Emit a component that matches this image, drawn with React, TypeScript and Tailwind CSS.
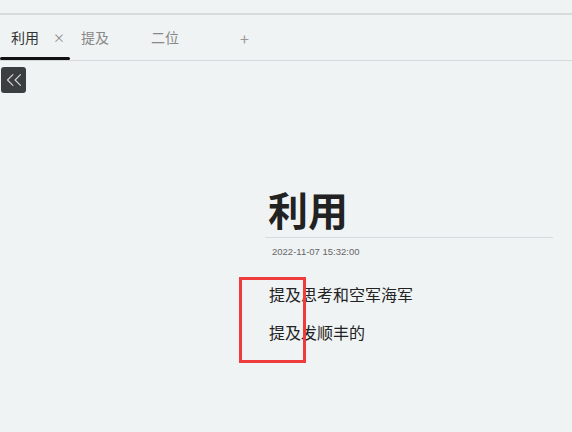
import React from "react";
import { ChevronsLeft } from "lucide-react";

const cjk = "font-['Noto_Sans_CJK_SC','Noto_Sans',sans-serif]";

export default function App() {
  return (
    <div className={`relative w-[572px] h-[432px] overflow-hidden bg-[#f0f3f4] ${cjk}`}>
      <div className="h-[13px]" />
      <div className="h-[2px] bg-[#d8dbdc]" />

      {/* tab bar */}
      <div className="flex h-[46px] items-center border-b border-[#d6d9db]">
        <div className="relative flex h-full w-[70px] items-center pl-[11px]">
          <span className="text-[14px] text-[#333]">利用</span>
          <span className="ml-[14px] text-[12px] text-[#888]">×</span>
          <div className="absolute bottom-0 left-0 h-[3px] w-[70px] rounded-full bg-[#111]" />
        </div>
        <div className="flex h-full w-[70px] items-center pl-[11px]">
          <span className="text-[14px] text-[#888]">提及</span>
        </div>
        <div className="flex h-full w-[70px] items-center pl-[11px]">
          <span className="text-[14px] text-[#888]">二位</span>
        </div>
        <div className="flex h-full w-[70px] items-center pl-[30px]">
          <span className="text-[16px] text-[#999]">+</span>
        </div>
      </div>

      <button className="ml-[1px] mt-[6px] flex h-[26px] w-[25px] items-center justify-center overflow-hidden rounded-[3px] bg-[#3b3e40]">
        <ChevronsLeft size={26} strokeWidth={1.1} className="shrink-0 text-[#d0d0d0]" />
      </button>

      {/* document */}
      <div className="ml-[265px] mt-[92px] w-[288px]">
        <h1 className="border-b border-[#d8dbdd] pb-[4px] pl-[3px] text-[40px] font-bold leading-[48px] text-[#222]">
          利用
        </h1>
        <div className="mt-[7px] pl-[7px] font-['Liberation_Sans',sans-serif] text-[9.5px] leading-[14px] text-[#666]">
          2022-11-07 15:32:00
        </div>
        <p className="mt-[23px] pl-[4px] text-[16px] leading-[24px] text-[#222]">
          提及思考和空军海军
        </p>
        <p className="mt-[14px] pl-[4px] text-[16px] leading-[24px] text-[#222]">
          提及发顺丰的
        </p>
      </div>

      <div className="absolute left-[239px] top-[277px] h-[86px] w-[67px] border-[3px] border-[#ef3b3b]" />
    </div>
  );
}
